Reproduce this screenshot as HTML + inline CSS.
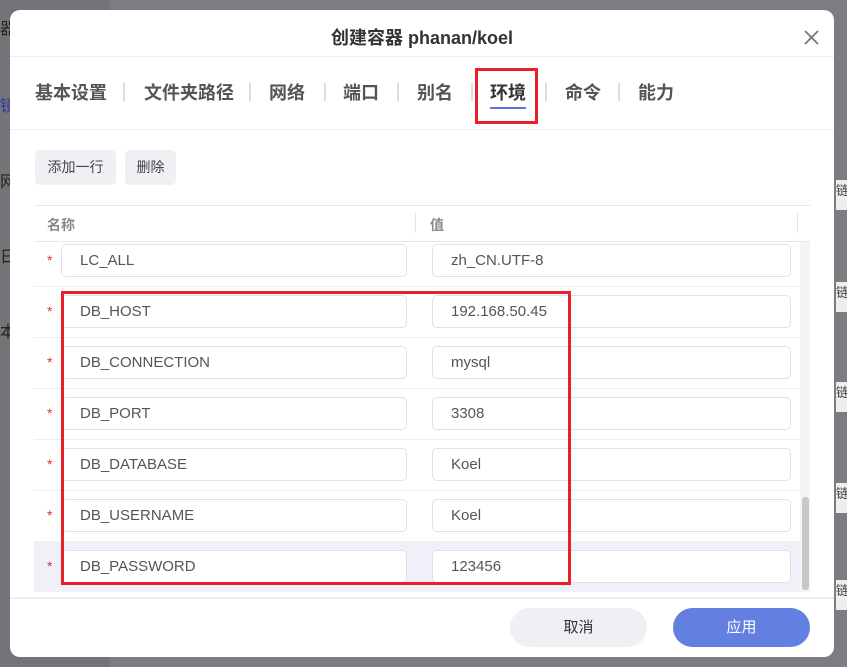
<!DOCTYPE html>
<html><head><meta charset="utf-8"><style>
body{margin:0;width:847px;height:667px;background:#7c7d80;position:relative;overflow:hidden;font-family:"Liberation Sans","Noto Sans CJK SC",sans-serif}
.a{position:absolute}
.dlg{left:10px;top:10px;width:824px;height:647px;background:#fff;border-radius:10px}
.inp{position:absolute;height:33px;border:1px solid #dfe1e8;border-radius:5px;background:#fff;box-sizing:border-box;font-size:15px;color:#555;line-height:32px;padding-left:18px}
.star{position:absolute;left:47px;color:#d33;font-size:14px}
.tab{position:absolute;top:79px;font-size:18px;font-weight:bold;color:#555}
.sep{position:absolute;top:83px;width:2px;height:18px;background:#ddd}
</style></head><body>
<div class="a" style="left:0;top:0;width:110px;height:667px;background:#737477"></div>
<div class="a" style="left:0;top:15px;font-size:16px;color:#222">器</div>
<div class="a" style="left:0;top:92px;font-size:16px;color:#33a">镜</div>
<div class="a" style="left:0;top:168px;font-size:16px;color:#222">网</div>
<div class="a" style="left:0;top:243px;font-size:16px;color:#222">日</div>
<div class="a" style="left:0;top:318px;font-size:16px;color:#222">本</div>
<div class="a dlg"></div>
<div class="a" style="left:10px;top:24px;width:824px;text-align:center;font-size:18px;font-weight:bold;color:#333">创建容器 phanan/koel</div>
<svg class="a" style="left:804px;top:30px" width="15" height="15" viewBox="0 0 15 15"><path d="M1 1L14 14M14 1L1 14" stroke="#777" stroke-width="1.8"/></svg>
<div class="a" style="left:10px;top:56px;width:824px;height:1px;background:#eee"></div>
<div class="tab" style="left:35px">基本设置</div><div class="sep" style="left:123px"></div>
<div class="tab" style="left:144px">文件夹路径</div><div class="sep" style="left:249px"></div>
<div class="tab" style="left:269px">网络</div><div class="sep" style="left:324px"></div>
<div class="tab" style="left:343px">端口</div><div class="sep" style="left:397px"></div>
<div class="tab" style="left:417px">别名</div><div class="sep" style="left:471px"></div>
<div class="tab" style="left:490px;color:#333">环境</div>
<div class="a" style="left:490px;top:107px;width:36px;height:2px;background:#5b74e0"></div>
<div class="sep" style="left:545px"></div>
<div class="tab" style="left:565px">命令</div><div class="sep" style="left:618px"></div>
<div class="tab" style="left:638px">能力</div>
<div class="a" style="left:10px;top:129px;width:824px;height:1px;background:#eee"></div>
<div class="a" style="left:35px;top:150px;width:81px;height:35px;background:#eff0f4;border-radius:5px;font-size:14px;color:#444;line-height:35px;text-align:center">添加一行</div>
<div class="a" style="left:125px;top:150px;width:51px;height:35px;background:#eff0f4;border-radius:5px;font-size:14px;color:#444;line-height:35px;text-align:center">删除</div>
<div class="a" style="left:34px;top:205px;width:776px;height:1px;background:#e8e8e8"></div>
<div class="a" style="left:47px;top:215px;font-size:14px;font-weight:bold;color:#888">名称</div>
<div class="a" style="left:415px;top:213px;width:1px;height:20px;background:#e5e5e5"></div>
<div class="a" style="left:430px;top:215px;font-size:14px;font-weight:bold;color:#888">值</div>
<div class="a" style="left:797px;top:213px;width:1px;height:20px;background:#e5e5e5"></div>
<div class="a" style="left:34px;top:241px;width:776px;height:1px;background:#e8e8e8"></div>
<div class="a" style="left:34px;top:541px;width:766px;height:51px;background:#eff0f8"></div>
<div class="a" style="left:800px;top:242px;width:10px;height:350px;background:#f5f5f5"></div>
<div class="a" style="left:802px;top:497px;width:7px;height:93px;background:#c8c8c8;border-radius:3px"></div>

<div class="star" style="top:252px">*</div><div class="inp" style="left:61px;top:244px;width:346px">LC_ALL</div><div class="inp" style="left:432px;top:244px;width:359px">zh_CN.UTF-8</div>
<div class="a" style="left:34px;top:286px;width:766px;height:1px;background:#eee"></div>
<div class="star" style="top:303px">*</div><div class="inp" style="left:61px;top:295px;width:346px">DB_HOST</div><div class="inp" style="left:432px;top:295px;width:359px">192.168.50.45</div>
<div class="a" style="left:34px;top:337px;width:766px;height:1px;background:#eee"></div>
<div class="star" style="top:354px">*</div><div class="inp" style="left:61px;top:346px;width:346px">DB_CONNECTION</div><div class="inp" style="left:432px;top:346px;width:359px">mysql</div>
<div class="a" style="left:34px;top:388px;width:766px;height:1px;background:#eee"></div>
<div class="star" style="top:405px">*</div><div class="inp" style="left:61px;top:397px;width:346px">DB_PORT</div><div class="inp" style="left:432px;top:397px;width:359px">3308</div>
<div class="a" style="left:34px;top:439px;width:766px;height:1px;background:#eee"></div>
<div class="star" style="top:456px">*</div><div class="inp" style="left:61px;top:448px;width:346px">DB_DATABASE</div><div class="inp" style="left:432px;top:448px;width:359px">Koel</div>
<div class="a" style="left:34px;top:490px;width:766px;height:1px;background:#eee"></div>
<div class="star" style="top:507px">*</div><div class="inp" style="left:61px;top:499px;width:346px">DB_USERNAME</div><div class="inp" style="left:432px;top:499px;width:359px">Koel</div>
<div class="star" style="top:558px">*</div><div class="inp" style="left:61px;top:550px;width:346px">DB_PASSWORD</div><div class="inp" style="left:432px;top:550px;width:359px">123456</div>

<div class="a" style="left:10px;top:597px;width:824px;height:2px;background:#eee"></div>
<div class="a" style="left:510px;top:608px;width:137px;height:39px;background:#eff0f4;border-radius:20px;font-size:15px;color:#333;line-height:39px;text-align:center">取消</div>
<div class="a" style="left:673px;top:608px;width:137px;height:39px;background:#6380e0;border-radius:20px;font-size:15px;color:#fff;line-height:39px;text-align:center">应用</div>

<div class="a" style="left:475px;top:68px;width:63px;height:56px;border:3px solid #e8202a;box-sizing:border-box"></div>
<div class="a" style="left:61px;top:291px;width:510px;height:294px;border:3px solid #e8202a;box-sizing:border-box"></div>
<div class="a" style="left:836px;top:180px;width:11px;height:30px;background:#eee;font-size:13px;color:#444">链</div>
<div class="a" style="left:836px;top:282px;width:11px;height:30px;background:#eee;font-size:13px;color:#444">链</div>
<div class="a" style="left:836px;top:382px;width:11px;height:30px;background:#eee;font-size:13px;color:#444">链</div>
<div class="a" style="left:836px;top:483px;width:11px;height:30px;background:#eee;font-size:13px;color:#444">链</div>
<div class="a" style="left:836px;top:580px;width:11px;height:30px;background:#eee;font-size:13px;color:#444">链</div>
</body></html>
